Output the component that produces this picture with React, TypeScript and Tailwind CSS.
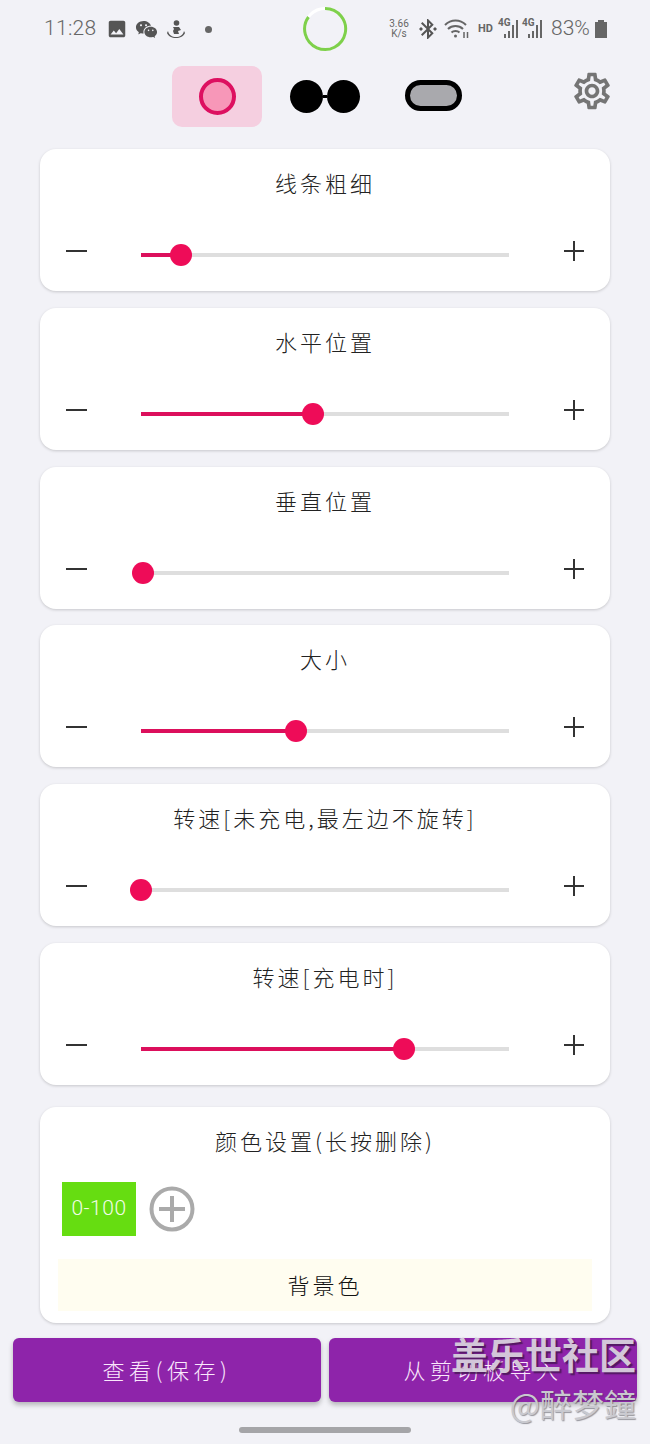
import React from "react";
import { MdOutlineSettings, MdImage, MdBluetoothConnected } from "react-icons/md";
import { RiWechatFill } from "react-icons/ri";

const cjk = "font-['Noto_Sans_CJK_SC','Noto_Sans_CJK_JP',serif]";

function Slider({ title, pct }: { title: string; pct: number }) {
  return (
    <div className="h-[142px] rounded-2xl bg-white shadow-[0_1px_3px_rgba(0,0,0,0.18)] flex flex-col">
      <div className={`pt-[17px] h-[80px] text-center text-[22px] leading-[32px] tracking-[3px] text-[#222] font-light ${cjk}`}>{title}</div>
      <div className="flex items-start pl-[26px]">
        <div className="w-[21px] h-[2px] mt-[21px] bg-[#333]" />
        <div className="relative ml-[54px] mt-[24px] w-[368px] h-[4px] bg-[#dedede]">
          <div className="absolute left-0 top-0 h-[4px] bg-[#dc0f5c]" style={{ width: `${pct}%` }} />
          <div className="absolute top-[-9px] w-[22px] h-[22px] -ml-[11px] rounded-full bg-[#ee0c58]" style={{ left: `${pct}%` }} />
        </div>
        <div className="relative ml-[55px] mt-[12px] w-[20px] h-[20px]">
          <div className="absolute left-0 top-[9px] w-[20px] h-[2px] bg-[#333]" />
          <div className="absolute left-[9px] top-0 w-[2px] h-[20px] bg-[#333]" />
        </div>
      </div>
    </div>
  );
}

function Signal() {
  return (
    <div className="relative w-[24px] h-[20px]">
      <span className="absolute left-0 top-[-1px] text-[10px] leading-[10px] font-bold text-[#666] font-['Roboto',sans-serif]">4G</span>
      <svg className="absolute left-0 top-0" width="24" height="20" viewBox="0 0 24 20" fill="#666">
        <rect x="6" y="15" width="2" height="4" />
        <rect x="10" y="12" width="2" height="7" />
        <rect x="14" y="6" width="2" height="13" />
        <rect x="18" y="1" width="2" height="18" />
      </svg>
    </div>
  );
}

export default function App() {
  const sliders: [string, number][] = [
    ["线条粗细", 11],
    ["水平位置", 46.7],
    ["垂直位置", 0.5],
    ["大小", 42.2],
    ["转速[未充电,最左边不旋转]", 0],
    ["转速[充电时]", 71.5],
  ];
  return (
    <div className="relative w-[650px] h-[1444px] overflow-hidden bg-[#f2f2f7] flex flex-col">
      {/* status bar */}
      <div className="h-[58px] flex items-center pl-[44px] text-[#666] font-['Roboto',sans-serif]">
        <span className="text-[21px] font-light w-[54px] tracking-[0.3px]">11:28</span>
        <MdImage className="ml-[8px]" size={22} color="#555" />
        <RiWechatFill className="ml-[7px]" size={23} color="#555" />
        <svg className="ml-[8px]" width="20" height="20" viewBox="0 0 20 20" fill="#555">
          <circle cx="10.500" cy="4" r="2.800" />
          <path d="M7 8h6l2 3-3 1 1 3h-5l-1-3 1-2zM2 12c1 4 4 6 8 6s7-2 8-6l1 2c-1 3-5 5-9 5s-8-2-9-5z" />
        </svg>
        <div className="ml-[19px] w-[7px] h-[7px] rounded-full bg-[#666]" />
        <svg className="ml-[90px]" width="46" height="46" viewBox="0 0 46 46" fill="none">
          <circle cx="23" cy="23" r="20.500" stroke="#ffffff" strokeWidth="3" />
          <path d="M23 2.500A20.500 20.500 0 1 1 6.500 11" stroke="#7ed04b" strokeWidth="3" />
        </svg>
        <div className="ml-[39px] w-[24px] text-[10px] leading-[10px] text-center">
          <div>3.66</div>
          <div>K/s</div>
        </div>
        <MdBluetoothConnected className="ml-[5px]" size={24} color="#555" />
        <svg className="ml-[4px]" width="26" height="22" viewBox="0 0 26 22" fill="none" stroke="#666" strokeWidth="2">
          <path d="M1 7c6-6 15-6 21 0M4 11c4-4 11-4 15 0M7.500 14.500c2-2 6-2 8 0" />
          <circle cx="11.500" cy="18" r="1.500" fill="#666" stroke="none" />
          <path d="M20 14v6M23.500 20v-6" strokeWidth="1.500" />
        </svg>
        <span className="ml-[8px] text-[11px] font-bold w-[20px]">HD</span>
        <Signal />
        <Signal />
        <span className="ml-[5px] text-[21px] font-light w-[41px]">83%</span>
        <svg className="ml-[2px]" width="14" height="18" viewBox="0 0 14 18" fill="#666">
          <rect x="4" y="0" width="6" height="2" />
          <rect x="1" y="2" width="12" height="16" />
        </svg>
      </div>

      {/* shape selector */}
      <div className="h-[91px] flex items-start pl-[172px] pt-[8px]">
        <div className="w-[90px] h-[61px] rounded-[10px] bg-[#f5cfe0] flex items-center justify-center">
          <div className="w-[37px] h-[37px] rounded-full border-4 border-[#dd1060] bg-[#f797b8]" />
        </div>
        <div className="ml-[28px] mt-[14px] w-[70px] h-[33px] flex items-center">
          <div className="w-[33px] h-[33px] rounded-full bg-black" />
          <div className="w-[4px] h-[3px] bg-black" />
          <div className="w-[33px] h-[33px] rounded-full bg-black" />
        </div>
        <div className="ml-[45px] mt-[14px] w-[57px] h-[31px] rounded-full border-[5px] border-black bg-[#a9a9ad]" />
        <MdOutlineSettings className="ml-[108px] mt-[3px]" size={44} color="#757575" />
      </div>

      {/* cards */}
      <div className="px-[40px] flex flex-col gap-[16.800px]">
        {sliders.map(([t, p]) => (
          <Slider key={t} title={t} pct={p} />
        ))}
      </div>

      <div className="mx-[40px] mt-[22px] h-[216px] rounded-2xl bg-white shadow-[0_1px_3px_rgba(0,0,0,0.18)] flex flex-col">
        <div className={`pt-[17px] h-[75px] text-center text-[22px] leading-[32px] tracking-[3px] text-[#222] font-light ${cjk}`}>颜色设置(长按删除)</div>
        <div className="flex items-center pl-[22px]">
          <div className="w-[74px] h-[54px] bg-[#66dd11] flex items-center justify-center text-[#f2fce8] text-[21px] tracking-[0.5px] font-light font-['Roboto',sans-serif]">0-100</div>
          <svg className="ml-[13px]" width="46" height="46" viewBox="0 0 46 46" fill="none" stroke="#aaaaaa">
            <circle cx="23" cy="23" r="20.500" strokeWidth="4" />
            <path d="M10 23h26M23 10v26" strokeWidth="4" />
          </svg>
        </div>
        <div className={`mx-[18px] mt-[23px] h-[52px] bg-[#fffdf0] flex items-center justify-center text-[22px] tracking-[3px] text-[#111] font-light ${cjk}`}>背景色</div>
      </div>

      {/* bottom buttons */}
      <div className="mt-[15px] px-[13px] flex gap-[8px]">
        <div className={`flex-1 h-[64px] rounded-[6px] bg-[#8e24aa] shadow-[0_3px_5px_rgba(0,0,0,0.25)] flex items-center justify-center text-[22px] tracking-[4.500px] text-[#fae8fc] font-light ${cjk}`}>查看(保存)</div>
        <div className={`flex-1 h-[64px] rounded-[6px] bg-[#8e24aa] shadow-[0_3px_5px_rgba(0,0,0,0.25)] flex items-center justify-center text-[22px] tracking-[4.500px] text-[#fae8fc] font-light ${cjk}`}>从剪切板导入</div>
      </div>

      <div className="mt-[25px] mx-auto w-[172px] h-[6px] rounded-full bg-[#a5a5a8]" />

      {/* watermark overlay */}
      <div className={`absolute right-[14px] top-[1333px] text-[37px] leading-[42px] font-bold text-[#d3c6d9] [text-shadow:2px_2px_1px_rgba(60,20,70,0.7)] whitespace-nowrap ${cjk}`}>盖乐世社区</div>
      <div className={`absolute right-[14px] top-[1384px] text-[32px] leading-[38px] text-[#c9c9cf] [text-shadow:1px_1px_1px_rgba(60,60,70,0.5)] whitespace-nowrap ${cjk}`}>@醉梦鐘</div>
    </div>
  );
}
